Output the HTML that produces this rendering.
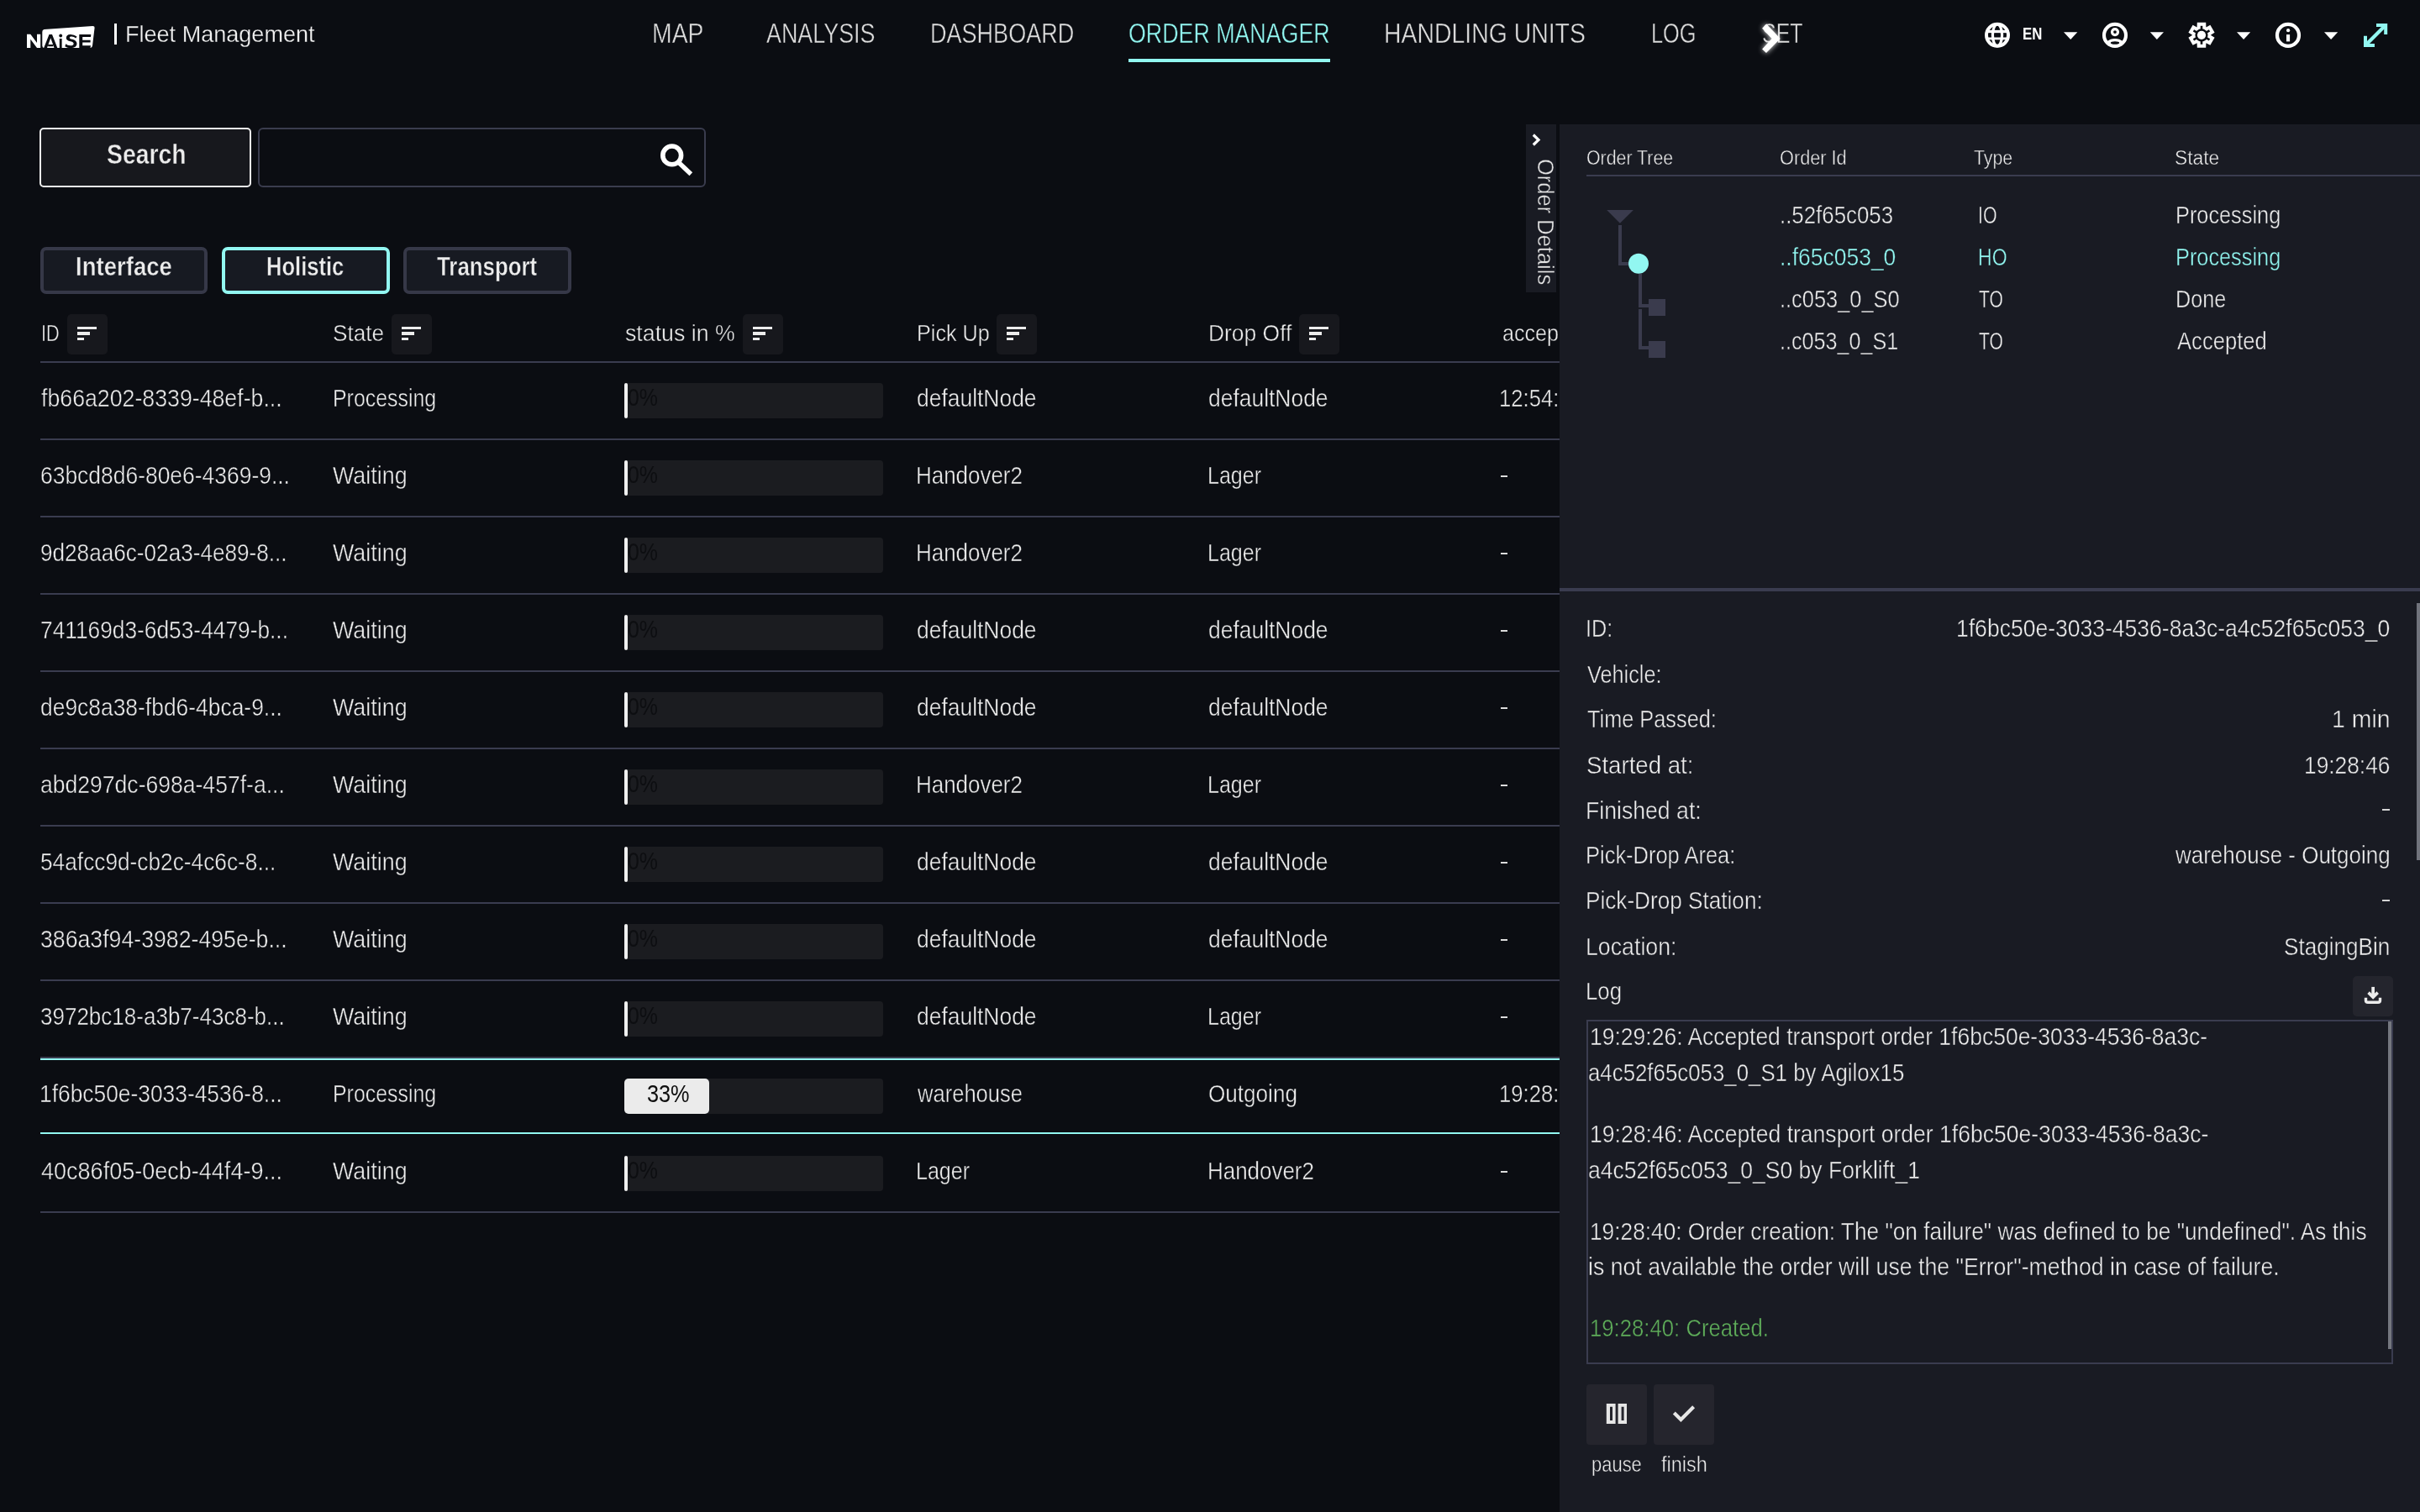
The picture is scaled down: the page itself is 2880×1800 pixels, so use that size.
<!DOCTYPE html>
<html><head><meta charset="utf-8"><style>
html,body{margin:0;padding:0;width:2880px;height:1800px;overflow:hidden;background:#0b0d12;font-family:"Liberation Sans",sans-serif}
.t{position:absolute;white-space:pre;line-height:1;transform-origin:0 0}
@media (max-width:1500px){html{zoom:0.5}}
</style></head><body>
<svg style="position:absolute;left:0;top:0" width="160" height="80" viewBox="0 0 160 80">
<path d="M32 57 L32 40.8 L36.3 40.8 L44 51 L44 40.8 L48.2 40.8 L48.2 57 L44 57 L36.3 46.7 L36.3 57 Z" fill="#fff"/>
<path d="M52.5 35 Q50.2 35.6 50.3 38 L50.3 54.5 Q50.6 57 52.5 57 L107.5 57 Q109.6 56.6 110 54.5 L112.6 33 Q112.8 30.8 110.2 30.9 Z" fill="#fff"/>
<path d="M52.2 57 L58.5 41 L62 41 L68.3 57 L64.5 57 L60.3 45.3 L56 57 Z M57.2 53 L63.2 53 L63.2 55.2 L57.2 55.2 Z" fill="#0b0d12"/>
<rect x="70.8" y="46" width="2.8" height="11" fill="#0b0d12"/>
<circle cx="72.2" cy="42.5" r="1.9" fill="#0b0d12"/>
<path d="M91.5 43.5 Q88 40.8 83.5 41 Q78.8 41.3 78.8 45.2 Q79 48.2 84 49.3 Q88 50.2 87.6 52.2 Q87.2 54.4 83.5 54.2 Q80.3 54 78.3 52.2 L77.3 55.3 Q80 57.2 84 57.2 Q91.5 57 91.5 52 Q91.4 48 86 46.8 Q82.6 46 82.8 44.7 Q83 43.5 85.2 43.6 Q88 43.7 90.3 45.6 Z" fill="#0b0d12"/>
<path d="M94.3 41.1 L108.3 41.1 L108 44 L98.2 44 L98.2 47.8 L107.6 47.8 L107.6 50.6 L98.2 50.6 L98.2 54.2 L108 54.2 L107.5 57 L94.3 57 Z" fill="#0b0d12"/>
</svg><div style="position:absolute;left:136.2px;top:28.4px;width:2.6px;height:24.4px;background:#fff;"></div><div class="t" style="left:148.50px;top:26.35px;font-size:28.41px;transform:scaleX(0.9522);color:#f2f2f2;-webkit-text-stroke:0.3px #0b0d12">Fleet Management</div><div class="t" style="left:776.25px;top:24.12px;font-size:32.46px;transform:scaleX(0.8743);color:#dcdcdc;-webkit-text-stroke:0.45px #0b0d12">MAP</div><div class="t" style="left:912.00px;top:24.12px;font-size:32.46px;transform:scaleX(0.8286);color:#dcdcdc;-webkit-text-stroke:0.45px #0b0d12">ANALYSIS</div><div class="t" style="left:1106.63px;top:24.12px;font-size:32.46px;transform:scaleX(0.8331);color:#dcdcdc;-webkit-text-stroke:0.45px #0b0d12">DASHBOARD</div><div class="t" style="left:1342.97px;top:24.12px;font-size:32.46px;transform:scaleX(0.8254);color:#92f7f1;-webkit-text-stroke:0.45px #0b0d12">ORDER MANAGER</div><div style="position:absolute;left:1343px;top:70px;width:240px;height:4px;background:#92f7f1;"></div><div class="t" style="left:1647.25px;top:24.12px;font-size:32.46px;transform:scaleX(0.8754);color:#dcdcdc;-webkit-text-stroke:0.45px #0b0d12">HANDLING UNITS</div><div class="t" style="left:1965.44px;top:24.12px;font-size:32.46px;transform:scaleX(0.7808);color:#dcdcdc;-webkit-text-stroke:0.45px #0b0d12">LOG</div><div class="t" style="left:2096.73px;top:24.12px;font-size:32.46px;transform:scaleX(0.7706);color:#dcdcdc;-webkit-text-stroke:0.45px #0b0d12">SET</div><svg style="position:absolute;left:2080px;top:15px" width="60" height="60" viewBox="2080 15 60 60">
<defs><filter id="gl" x="-50%" y="-50%" width="200%" height="200%"><feGaussianBlur stdDeviation="3"/></filter></defs>
<path d="M2097.1 33.7 L2102.2 28.5 L2118.7 46 L2102 63 L2097.1 58.5 L2108.6 46 Z" fill="#fff" filter="url(#gl)" opacity="0.9"/>
<path d="M2097.1 33.7 L2102.2 28.5 L2118.7 46 L2102 63 L2097.1 58.5 L2108.6 46 Z" fill="#fff"/>
</svg><svg style="position:absolute;left:2355px;top:20px" width="500" height="46" viewBox="2355 20 500 46">
<defs><clipPath id="ucl"><circle cx="2517" cy="41.9" r="13"/></clipPath></defs>
<g fill="none" stroke="#ffffff">
 <circle cx="2377" cy="41.8" r="13" stroke-width="4"/>
 <ellipse cx="2377" cy="41.8" rx="5.6" ry="13" stroke-width="3.2"/>
 <line x1="2363" y1="37.5" x2="2391" y2="37.5" stroke-width="3.3"/>
 <line x1="2363" y1="45.9" x2="2391" y2="45.9" stroke-width="2.8"/>
</g>
<path d="M2456 38.3 L2472.3 38.3 L2464.2 47 Z" fill="#ffffff"/>
<g fill="none" stroke="#ffffff">
 <circle cx="2517" cy="41.9" r="13" stroke-width="4.1"/>
 <circle cx="2517" cy="38.1" r="3.5" stroke-width="3.2"/>
</g>
<g clip-path="url(#ucl)"><ellipse cx="2517" cy="57.5" rx="13.5" ry="11.5" fill="#ffffff"/></g>
<ellipse cx="2517" cy="51" rx="5.2" ry="1.8" fill="#0b0d12"/>
<path d="M2558.8 38.3 L2575 38.3 L2566.9 47 Z" fill="#ffffff"/>
<path d="M2662 38.3 L2678.2 38.3 L2670.1 47 Z" fill="#ffffff"/>
<circle cx="2723" cy="41.9" r="13" fill="none" stroke="#ffffff" stroke-width="4.2"/>
<rect x="2721" y="41.1" width="4.1" height="8.3" fill="#ffffff"/>
<circle cx="2723.1" cy="36.2" r="2.1" fill="#ffffff"/>
<path d="M2766 38.3 L2782.2 38.3 L2774.1 47 Z" fill="#ffffff"/>
<g fill="#92f7f1">
 <path d="M2828 27.9 H2841.2 V41.1 H2837.2 V31.9 H2828 Z"/>
 <path d="M2813 42.8 H2817 V52 H2826 V56 H2813 Z"/>
</g>
<path d="M2839 30 L2815 54" stroke="#92f7f1" stroke-width="4.2"/>
<g transform="translate(2620 41.8)">
 <path fill="#ffffff" d="M-5.20 -15.00 L5.20 -15.00 L5.41 -9.37 L10.39 -12.00 L15.59 -3.00 L10.82 0.00 L15.59 3.00 L10.39 12.00 L5.41 9.37 L5.20 15.00 L-5.20 15.00 L-5.41 9.37 L-10.39 12.00 L-15.59 3.00 L-10.82 0.00 L-15.59 -3.00 L-10.39 -12.00 L-5.41 -9.37Z"/>
 <circle r="7.6" fill="#0b0d12"/>
 <g fill="#0b0d12"><rect x="-1.3" y="-11" width="2.6" height="5" transform="rotate(0)"/><rect x="-1.3" y="-11" width="2.6" height="5" transform="rotate(60)"/><rect x="-1.3" y="-11" width="2.6" height="5" transform="rotate(120)"/><rect x="-1.3" y="-11" width="2.6" height="5" transform="rotate(180)"/><rect x="-1.3" y="-11" width="2.6" height="5" transform="rotate(240)"/><rect x="-1.3" y="-11" width="2.6" height="5" transform="rotate(300)"/></g>
 <circle r="5.1" fill="#ffffff"/>
</g>
</svg><div class="t" style="left:2407.18px;top:29.98px;font-size:20.58px;transform:scaleX(0.8160);color:#fff;font-weight:bold">EN</div><div style="position:absolute;left:47px;top:152px;width:252px;height:71px;background:#17181d;box-sizing:border-box;border:2px solid #f0f0f0;border-radius:5px"></div><div class="t" style="left:126.50px;top:168.04px;font-size:32.32px;transform:scaleX(0.8783);color:#ececec;font-weight:bold;-webkit-text-stroke:0.45px #17181d">Search</div><div style="position:absolute;left:307px;top:152px;width:533px;height:71px;background:transparent;box-sizing:border-box;border:2px solid #3a3c4e;border-radius:6px"></div><svg style="position:absolute;left:780px;top:166px" width="50" height="48" viewBox="0 0 50 48">
<circle cx="19.7" cy="18.9" r="10.9" fill="none" stroke="#fff" stroke-width="5.6"/>
<path d="M27.5 27.3 L42.3 41.3" stroke="#fff" stroke-width="5.4" />
</svg><div style="position:absolute;left:48px;top:294px;width:199px;height:56px;background:#171a22;box-sizing:border-box;border:4px solid #363848;border-radius:7px"></div><div class="t" style="left:89.79px;top:301.94px;font-size:30.43px;transform:scaleX(0.9056);color:#ececec;font-weight:bold;-webkit-text-stroke:0.45px #171a22">Interface</div><div style="position:absolute;left:264px;top:294px;width:200px;height:56px;background:#171a22;box-sizing:border-box;border:4px solid #92f7f1;border-radius:7px"></div><div class="t" style="left:316.72px;top:301.94px;font-size:30.43px;transform:scaleX(0.8401);color:#ececec;font-weight:bold;-webkit-text-stroke:0.45px #171a22">Holistic</div><div style="position:absolute;left:480px;top:294px;width:200px;height:56px;background:#171a22;box-sizing:border-box;border:4px solid #363848;border-radius:7px"></div><div class="t" style="left:520.00px;top:301.94px;font-size:30.43px;transform:scaleX(0.8497);color:#ececec;font-weight:bold;-webkit-text-stroke:0.45px #171a22">Transport</div><div class="t" style="left:48.76px;top:382.48px;font-size:28.26px;transform:scaleX(0.7699);color:#ececec;-webkit-text-stroke:0.45px #0b0d12">ID</div><div style="position:absolute;left:80px;top:374px;width:48px;height:48px;background:#17181d;border-radius:5px"></div><div style="position:absolute;left:92.1px;top:388.8px;width:22.8px;height:3.2px;background:#ececec;"></div><div style="position:absolute;left:92.1px;top:395.4px;width:15.4px;height:3.2px;background:#ececec;"></div><div style="position:absolute;left:92.1px;top:402px;width:8.2px;height:3.2px;background:#ececec;"></div><div class="t" style="left:396.27px;top:382.48px;font-size:28.26px;transform:scaleX(0.9261);color:#ececec;-webkit-text-stroke:0.45px #0b0d12">State</div><div style="position:absolute;left:466px;top:374px;width:48px;height:48px;background:#17181d;border-radius:5px"></div><div style="position:absolute;left:478.1px;top:388.8px;width:22.8px;height:3.2px;background:#ececec;"></div><div style="position:absolute;left:478.1px;top:395.4px;width:15.4px;height:3.2px;background:#ececec;"></div><div style="position:absolute;left:478.1px;top:402px;width:8.2px;height:3.2px;background:#ececec;"></div><div class="t" style="left:743.90px;top:382.48px;font-size:28.26px;transform:scaleX(0.9460);color:#ececec;-webkit-text-stroke:0.45px #0b0d12">status in %</div><div style="position:absolute;left:884px;top:374px;width:48px;height:48px;background:#17181d;border-radius:5px"></div><div style="position:absolute;left:896.1px;top:388.8px;width:22.8px;height:3.2px;background:#ececec;"></div><div style="position:absolute;left:896.1px;top:395.4px;width:15.4px;height:3.2px;background:#ececec;"></div><div style="position:absolute;left:896.1px;top:402px;width:8.2px;height:3.2px;background:#ececec;"></div><div class="t" style="left:1090.72px;top:382.48px;font-size:28.26px;transform:scaleX(0.8909);color:#ececec;-webkit-text-stroke:0.45px #0b0d12">Pick Up</div><div style="position:absolute;left:1186px;top:374px;width:48px;height:48px;background:#17181d;border-radius:5px"></div><div style="position:absolute;left:1198.1px;top:388.8px;width:22.8px;height:3.2px;background:#ececec;"></div><div style="position:absolute;left:1198.1px;top:395.4px;width:15.4px;height:3.2px;background:#ececec;"></div><div style="position:absolute;left:1198.1px;top:402px;width:8.2px;height:3.2px;background:#ececec;"></div><div class="t" style="left:1438.13px;top:382.48px;font-size:28.26px;transform:scaleX(0.9349);color:#ececec;-webkit-text-stroke:0.45px #0b0d12">Drop Off</div><div style="position:absolute;left:1546px;top:374px;width:48px;height:48px;background:#17181d;border-radius:5px"></div><div style="position:absolute;left:1558.1px;top:388.8px;width:22.8px;height:3.2px;background:#ececec;"></div><div style="position:absolute;left:1558.1px;top:395.4px;width:15.4px;height:3.2px;background:#ececec;"></div><div style="position:absolute;left:1558.1px;top:402px;width:8.2px;height:3.2px;background:#ececec;"></div><div class="t" style="left:1787.81px;top:382.48px;font-size:28.26px;transform:scaleX(0.8895);color:#ececec;-webkit-text-stroke:0.45px #0b0d12">accep</div><div style="position:absolute;left:48px;top:430px;width:1808px;height:2px;background:#3a3c4f;"></div><div class="t" style="left:48.80px;top:459.99px;font-size:28.84px;transform:scaleX(0.9267);color:#ececec;-webkit-text-stroke:0.45px #0b0d12">fb66a202-8339-48ef-b...</div><div class="t" style="left:396.17px;top:459.99px;font-size:28.84px;transform:scaleX(0.8633);color:#ececec;-webkit-text-stroke:0.45px #0b0d12">Processing</div><div style="position:absolute;left:743px;top:456px;width:307.5px;height:41.5px;background:#1b1c20;border-radius:4px"></div><div style="position:absolute;left:742.9px;top:456px;width:4.2px;height:41.5px;background:#f0f0f0;border-radius:2px"></div><div class="t" style="left:747.44px;top:459.36px;font-size:28.99px;transform:scaleX(0.8576);color:#0d0e11">0%</div><div class="t" style="left:1090.58px;top:459.99px;font-size:28.84px;transform:scaleX(0.9170);color:#ececec;-webkit-text-stroke:0.45px #0b0d12">defaultNode</div><div class="t" style="left:1438.28px;top:459.99px;font-size:28.84px;transform:scaleX(0.9170);color:#ececec;-webkit-text-stroke:0.45px #0b0d12">defaultNode</div><div class="t" style="left:1784.22px;top:459.99px;font-size:28.84px;transform:scaleX(0.8895);color:#ececec;-webkit-text-stroke:0.45px #0b0d12">12:54:</div><div style="position:absolute;left:48px;top:522px;width:1808px;height:2px;background:#3a3c4f;"></div><div class="t" style="left:47.88px;top:551.99px;font-size:28.84px;transform:scaleX(0.9172);color:#ececec;-webkit-text-stroke:0.45px #0b0d12">63bcd8d6-80e6-4369-9...</div><div class="t" style="left:395.90px;top:551.99px;font-size:28.84px;transform:scaleX(0.9317);color:#ececec;-webkit-text-stroke:0.45px #0b0d12">Waiting</div><div style="position:absolute;left:743px;top:548px;width:307.5px;height:41.5px;background:#1b1c20;border-radius:4px"></div><div style="position:absolute;left:742.9px;top:548px;width:4.2px;height:41.5px;background:#f0f0f0;border-radius:2px"></div><div class="t" style="left:747.44px;top:551.36px;font-size:28.99px;transform:scaleX(0.8576);color:#0d0e11">0%</div><div class="t" style="left:1089.70px;top:551.99px;font-size:28.84px;transform:scaleX(0.9000);color:#ececec;-webkit-text-stroke:0.45px #0b0d12">Handover2</div><div class="t" style="left:1437.46px;top:551.99px;font-size:28.84px;transform:scaleX(0.8692);color:#ececec;-webkit-text-stroke:0.45px #0b0d12">Lager</div><div style="position:absolute;left:1786px;top:566px;width:8px;height:2px;background:#dcdcdc;"></div><div style="position:absolute;left:48px;top:614px;width:1808px;height:2px;background:#3a3c4f;"></div><div class="t" style="left:47.89px;top:643.99px;font-size:28.84px;transform:scaleX(0.9069);color:#ececec;-webkit-text-stroke:0.45px #0b0d12">9d28aa6c-02a3-4e89-8...</div><div class="t" style="left:395.90px;top:643.99px;font-size:28.84px;transform:scaleX(0.9317);color:#ececec;-webkit-text-stroke:0.45px #0b0d12">Waiting</div><div style="position:absolute;left:743px;top:640px;width:307.5px;height:41.5px;background:#1b1c20;border-radius:4px"></div><div style="position:absolute;left:742.9px;top:640px;width:4.2px;height:41.5px;background:#f0f0f0;border-radius:2px"></div><div class="t" style="left:747.44px;top:643.36px;font-size:28.99px;transform:scaleX(0.8576);color:#0d0e11">0%</div><div class="t" style="left:1089.70px;top:643.99px;font-size:28.84px;transform:scaleX(0.9000);color:#ececec;-webkit-text-stroke:0.45px #0b0d12">Handover2</div><div class="t" style="left:1437.46px;top:643.99px;font-size:28.84px;transform:scaleX(0.8692);color:#ececec;-webkit-text-stroke:0.45px #0b0d12">Lager</div><div style="position:absolute;left:1786px;top:658px;width:8px;height:2px;background:#dcdcdc;"></div><div style="position:absolute;left:48px;top:706px;width:1808px;height:2px;background:#3a3c4f;"></div><div class="t" style="left:47.89px;top:735.99px;font-size:28.84px;transform:scaleX(0.9125);color:#ececec;-webkit-text-stroke:0.45px #0b0d12">741169d3-6d53-4479-b...</div><div class="t" style="left:395.90px;top:735.99px;font-size:28.84px;transform:scaleX(0.9317);color:#ececec;-webkit-text-stroke:0.45px #0b0d12">Waiting</div><div style="position:absolute;left:743px;top:732px;width:307.5px;height:41.5px;background:#1b1c20;border-radius:4px"></div><div style="position:absolute;left:742.9px;top:732px;width:4.2px;height:41.5px;background:#f0f0f0;border-radius:2px"></div><div class="t" style="left:747.44px;top:735.36px;font-size:28.99px;transform:scaleX(0.8576);color:#0d0e11">0%</div><div class="t" style="left:1090.58px;top:735.99px;font-size:28.84px;transform:scaleX(0.9170);color:#ececec;-webkit-text-stroke:0.45px #0b0d12">defaultNode</div><div class="t" style="left:1438.28px;top:735.99px;font-size:28.84px;transform:scaleX(0.9170);color:#ececec;-webkit-text-stroke:0.45px #0b0d12">defaultNode</div><div style="position:absolute;left:1786px;top:750px;width:8px;height:2px;background:#dcdcdc;"></div><div style="position:absolute;left:48px;top:798px;width:1808px;height:2px;background:#3a3c4f;"></div><div class="t" style="left:47.88px;top:827.99px;font-size:28.84px;transform:scaleX(0.9164);color:#ececec;-webkit-text-stroke:0.45px #0b0d12">de9c8a38-fbd6-4bca-9...</div><div class="t" style="left:395.90px;top:827.99px;font-size:28.84px;transform:scaleX(0.9317);color:#ececec;-webkit-text-stroke:0.45px #0b0d12">Waiting</div><div style="position:absolute;left:743px;top:824px;width:307.5px;height:41.5px;background:#1b1c20;border-radius:4px"></div><div style="position:absolute;left:742.9px;top:824px;width:4.2px;height:41.5px;background:#f0f0f0;border-radius:2px"></div><div class="t" style="left:747.44px;top:827.36px;font-size:28.99px;transform:scaleX(0.8576);color:#0d0e11">0%</div><div class="t" style="left:1090.58px;top:827.99px;font-size:28.84px;transform:scaleX(0.9170);color:#ececec;-webkit-text-stroke:0.45px #0b0d12">defaultNode</div><div class="t" style="left:1438.28px;top:827.99px;font-size:28.84px;transform:scaleX(0.9170);color:#ececec;-webkit-text-stroke:0.45px #0b0d12">defaultNode</div><div style="position:absolute;left:1786px;top:842px;width:8px;height:2px;background:#dcdcdc;"></div><div style="position:absolute;left:48px;top:890px;width:1808px;height:2px;background:#3a3c4f;"></div><div class="t" style="left:47.88px;top:919.99px;font-size:28.84px;transform:scaleX(0.9209);color:#ececec;-webkit-text-stroke:0.45px #0b0d12">abd297dc-698a-457f-a...</div><div class="t" style="left:395.90px;top:919.99px;font-size:28.84px;transform:scaleX(0.9317);color:#ececec;-webkit-text-stroke:0.45px #0b0d12">Waiting</div><div style="position:absolute;left:743px;top:916px;width:307.5px;height:41.5px;background:#1b1c20;border-radius:4px"></div><div style="position:absolute;left:742.9px;top:916px;width:4.2px;height:41.5px;background:#f0f0f0;border-radius:2px"></div><div class="t" style="left:747.44px;top:919.36px;font-size:28.99px;transform:scaleX(0.8576);color:#0d0e11">0%</div><div class="t" style="left:1089.70px;top:919.99px;font-size:28.84px;transform:scaleX(0.9000);color:#ececec;-webkit-text-stroke:0.45px #0b0d12">Handover2</div><div class="t" style="left:1437.46px;top:919.99px;font-size:28.84px;transform:scaleX(0.8692);color:#ececec;-webkit-text-stroke:0.45px #0b0d12">Lager</div><div style="position:absolute;left:1786px;top:934px;width:8px;height:2px;background:#dcdcdc;"></div><div style="position:absolute;left:48px;top:982px;width:1808px;height:2px;background:#3a3c4f;"></div><div class="t" style="left:47.89px;top:1011.99px;font-size:28.84px;transform:scaleX(0.9112);color:#ececec;-webkit-text-stroke:0.45px #0b0d12">54afcc9d-cb2c-4c6c-8...</div><div class="t" style="left:395.90px;top:1011.99px;font-size:28.84px;transform:scaleX(0.9317);color:#ececec;-webkit-text-stroke:0.45px #0b0d12">Waiting</div><div style="position:absolute;left:743px;top:1008px;width:307.5px;height:41.5px;background:#1b1c20;border-radius:4px"></div><div style="position:absolute;left:742.9px;top:1008px;width:4.2px;height:41.5px;background:#f0f0f0;border-radius:2px"></div><div class="t" style="left:747.44px;top:1011.36px;font-size:28.99px;transform:scaleX(0.8576);color:#0d0e11">0%</div><div class="t" style="left:1090.58px;top:1011.99px;font-size:28.84px;transform:scaleX(0.9170);color:#ececec;-webkit-text-stroke:0.45px #0b0d12">defaultNode</div><div class="t" style="left:1438.28px;top:1011.99px;font-size:28.84px;transform:scaleX(0.9170);color:#ececec;-webkit-text-stroke:0.45px #0b0d12">defaultNode</div><div style="position:absolute;left:1786px;top:1026px;width:8px;height:2px;background:#dcdcdc;"></div><div style="position:absolute;left:48px;top:1074px;width:1808px;height:2px;background:#3a3c4f;"></div><div class="t" style="left:47.87px;top:1103.99px;font-size:28.84px;transform:scaleX(0.9254);color:#ececec;-webkit-text-stroke:0.45px #0b0d12">386a3f94-3982-495e-b...</div><div class="t" style="left:395.90px;top:1103.99px;font-size:28.84px;transform:scaleX(0.9317);color:#ececec;-webkit-text-stroke:0.45px #0b0d12">Waiting</div><div style="position:absolute;left:743px;top:1100px;width:307.5px;height:41.5px;background:#1b1c20;border-radius:4px"></div><div style="position:absolute;left:742.9px;top:1100px;width:4.2px;height:41.5px;background:#f0f0f0;border-radius:2px"></div><div class="t" style="left:747.44px;top:1103.36px;font-size:28.99px;transform:scaleX(0.8576);color:#0d0e11">0%</div><div class="t" style="left:1090.58px;top:1103.99px;font-size:28.84px;transform:scaleX(0.9170);color:#ececec;-webkit-text-stroke:0.45px #0b0d12">defaultNode</div><div class="t" style="left:1438.28px;top:1103.99px;font-size:28.84px;transform:scaleX(0.9170);color:#ececec;-webkit-text-stroke:0.45px #0b0d12">defaultNode</div><div style="position:absolute;left:1786px;top:1118px;width:8px;height:2px;background:#dcdcdc;"></div><div style="position:absolute;left:48px;top:1166px;width:1808px;height:2px;background:#3a3c4f;"></div><div class="t" style="left:47.90px;top:1195.99px;font-size:28.84px;transform:scaleX(0.9024);color:#ececec;-webkit-text-stroke:0.45px #0b0d12">3972bc18-a3b7-43c8-b...</div><div class="t" style="left:395.90px;top:1195.99px;font-size:28.84px;transform:scaleX(0.9317);color:#ececec;-webkit-text-stroke:0.45px #0b0d12">Waiting</div><div style="position:absolute;left:743px;top:1192px;width:307.5px;height:41.5px;background:#1b1c20;border-radius:4px"></div><div style="position:absolute;left:742.9px;top:1192px;width:4.2px;height:41.5px;background:#f0f0f0;border-radius:2px"></div><div class="t" style="left:747.44px;top:1195.36px;font-size:28.99px;transform:scaleX(0.8576);color:#0d0e11">0%</div><div class="t" style="left:1090.58px;top:1195.99px;font-size:28.84px;transform:scaleX(0.9170);color:#ececec;-webkit-text-stroke:0.45px #0b0d12">defaultNode</div><div class="t" style="left:1437.46px;top:1195.99px;font-size:28.84px;transform:scaleX(0.8692);color:#ececec;-webkit-text-stroke:0.45px #0b0d12">Lager</div><div style="position:absolute;left:1786px;top:1210px;width:8px;height:2px;background:#dcdcdc;"></div><div style="position:absolute;left:48px;top:1258px;width:1808px;height:2px;background:#3a3c4f;"></div><div class="t" style="left:46.97px;top:1287.99px;font-size:28.84px;transform:scaleX(0.9146);color:#ececec;-webkit-text-stroke:0.45px #0b0d12">1f6bc50e-3033-4536-8...</div><div class="t" style="left:396.17px;top:1287.99px;font-size:28.84px;transform:scaleX(0.8633);color:#ececec;-webkit-text-stroke:0.45px #0b0d12">Processing</div><div style="position:absolute;left:743px;top:1284px;width:307.5px;height:42px;background:#1b1c20;border-radius:4px"></div><div style="position:absolute;left:743px;top:1284px;width:101px;height:42px;background:#ebebeb;border-radius:5px"></div><div class="t" style="left:770.15px;top:1287.33px;font-size:29.86px;transform:scaleX(0.8454);color:#0d0d0d">33%</div><div class="t" style="left:1092.39px;top:1287.99px;font-size:28.84px;transform:scaleX(0.8865);color:#ececec;-webkit-text-stroke:0.45px #0b0d12">warehouse</div><div class="t" style="left:1438.29px;top:1287.99px;font-size:28.84px;transform:scaleX(0.9055);color:#ececec;-webkit-text-stroke:0.45px #0b0d12">Outgoing</div><div class="t" style="left:1784.22px;top:1287.99px;font-size:28.84px;transform:scaleX(0.8895);color:#ececec;-webkit-text-stroke:0.45px #0b0d12">19:28:</div><div class="t" style="left:48.80px;top:1379.99px;font-size:28.84px;transform:scaleX(0.9375);color:#ececec;-webkit-text-stroke:0.45px #0b0d12">40c86f05-0ecb-44f4-9...</div><div class="t" style="left:395.90px;top:1379.99px;font-size:28.84px;transform:scaleX(0.9317);color:#ececec;-webkit-text-stroke:0.45px #0b0d12">Waiting</div><div style="position:absolute;left:743px;top:1376px;width:307.5px;height:41.5px;background:#1b1c20;border-radius:4px"></div><div style="position:absolute;left:742.9px;top:1376px;width:4.2px;height:41.5px;background:#f0f0f0;border-radius:2px"></div><div class="t" style="left:747.44px;top:1379.36px;font-size:28.99px;transform:scaleX(0.8576);color:#0d0e11">0%</div><div class="t" style="left:1089.76px;top:1379.99px;font-size:28.84px;transform:scaleX(0.8692);color:#ececec;-webkit-text-stroke:0.45px #0b0d12">Lager</div><div class="t" style="left:1437.40px;top:1379.99px;font-size:28.84px;transform:scaleX(0.9000);color:#ececec;-webkit-text-stroke:0.45px #0b0d12">Handover2</div><div style="position:absolute;left:1786px;top:1394px;width:8px;height:2px;background:#dcdcdc;"></div><div style="position:absolute;left:48px;top:1442px;width:1808px;height:2px;background:#3a3c4f;"></div><div style="position:absolute;left:48px;top:1260px;width:1808px;height:2px;background:#92f7f1;"></div><div style="position:absolute;left:48px;top:1348px;width:1808px;height:2px;background:#92f7f1;"></div><div style="position:absolute;left:1856px;top:148px;width:1024px;height:1652px;background:#191b23;"></div><div style="position:absolute;left:1816px;top:148px;width:36px;height:200px;background:#191b23;"></div><svg style="position:absolute;left:1816px;top:148px" width="36" height="40" viewBox="0 0 36 40">
<path d="M8.8 12.5 L15 18.5 L8.8 24.5" stroke="#fff" stroke-width="3.2" fill="none"/></svg><div id="odt" style="position:absolute;left:1829.8px;top:189.5px;width:0;height:0"></div><div class="t" style="left:1888.32px;top:175.79px;font-size:24.35px;transform:scaleX(0.8761);color:#ececec;-webkit-text-stroke:0.45px #191b23">Order Tree</div><div class="t" style="left:2117.91px;top:175.79px;font-size:24.35px;transform:scaleX(0.8927);color:#ececec;-webkit-text-stroke:0.45px #191b23">Order Id</div><div class="t" style="left:2349.00px;top:175.79px;font-size:24.35px;transform:scaleX(0.8753);color:#ececec;-webkit-text-stroke:0.45px #191b23">Type</div><div class="t" style="left:2587.76px;top:175.79px;font-size:24.35px;transform:scaleX(0.9353);color:#ececec;-webkit-text-stroke:0.45px #191b23">State</div><div style="position:absolute;left:1888px;top:208px;width:992px;height:2px;background:#3a3c4f;"></div><div class="t" style="left:2117.90px;top:242.31px;font-size:28.70px;transform:scaleX(0.9008);color:#ececec;-webkit-text-stroke:0.45px #191b23">..52f65c053</div><div class="t" style="left:2353.81px;top:242.31px;font-size:28.70px;transform:scaleX(0.7453);color:#ececec;-webkit-text-stroke:0.45px #191b23">IO</div><div class="t" style="left:2589.24px;top:242.31px;font-size:28.70px;transform:scaleX(0.8823);color:#ececec;-webkit-text-stroke:0.45px #191b23">Processing</div><div class="t" style="left:2117.85px;top:292.31px;font-size:28.70px;transform:scaleX(0.9226);color:#92f7f1;-webkit-text-stroke:0.45px #191b23">..f65c053_0</div><div class="t" style="left:2353.69px;top:292.31px;font-size:28.70px;transform:scaleX(0.8032);color:#92f7f1;-webkit-text-stroke:0.45px #191b23">HO</div><div class="t" style="left:2589.24px;top:292.31px;font-size:28.70px;transform:scaleX(0.8823);color:#92f7f1;-webkit-text-stroke:0.45px #191b23">Processing</div><div class="t" style="left:2117.93px;top:342.31px;font-size:28.70px;transform:scaleX(0.8853);color:#ececec;-webkit-text-stroke:0.45px #191b23">..c053_0_S0</div><div class="t" style="left:2355.30px;top:342.31px;font-size:28.70px;transform:scaleX(0.7341);color:#ececec;-webkit-text-stroke:0.45px #191b23">TO</div><div class="t" style="left:2589.24px;top:342.31px;font-size:28.70px;transform:scaleX(0.8792);color:#ececec;-webkit-text-stroke:0.45px #191b23">Done</div><div class="t" style="left:2117.95px;top:392.31px;font-size:28.70px;transform:scaleX(0.8770);color:#ececec;-webkit-text-stroke:0.45px #191b23">..c053_0_S1</div><div class="t" style="left:2355.30px;top:392.31px;font-size:28.70px;transform:scaleX(0.7341);color:#ececec;-webkit-text-stroke:0.45px #191b23">TO</div><div class="t" style="left:2591.00px;top:392.31px;font-size:28.70px;transform:scaleX(0.8925);color:#ececec;-webkit-text-stroke:0.45px #191b23">Accepted</div><svg style="position:absolute;left:1900px;top:240px" width="100" height="200" viewBox="1900 240 100 200">
<path d="M1912.2 250 L1943.9 250 L1927.9 265.8 Z" fill="#3a3b4d"/>
<rect x="1926" y="268" width="4" height="48" fill="#3a3b4d"/>
<rect x="1926" y="312" width="14" height="4" fill="#3a3b4d"/>
<circle cx="1950" cy="313.8" r="12" fill="#92f7f1"/>
<rect x="1950" y="326" width="4" height="40" fill="#3a3b4d"/>
<rect x="1950" y="362" width="13" height="4" fill="#3a3b4d"/>
<rect x="1962" y="356" width="20" height="20" fill="#3a3b4d"/>
<rect x="1950" y="368" width="4" height="48" fill="#3a3b4d"/>
<rect x="1950" y="412" width="13" height="4" fill="#3a3b4d"/>
<rect x="1962" y="406" width="20" height="20" fill="#3a3b4d"/>
</svg><div style="position:absolute;left:1856px;top:700px;width:1024px;height:4px;background:#3a3c4f;"></div><div class="t" style="left:1886.84px;top:734.31px;font-size:28.70px;transform:scaleX(0.8811);color:#ececec;-webkit-text-stroke:0.45px #191b23">ID:</div><div class="t" style="left:2328.05px;top:734.31px;font-size:28.70px;transform:scaleX(0.9247);color:#ececec;-webkit-text-stroke:0.45px #191b23">1f6bc50e-3033-4536-8a3c-a4c52f65c053_0</div><div class="t" style="left:1888.60px;top:788.51px;font-size:28.70px;transform:scaleX(0.8812);color:#ececec;-webkit-text-stroke:0.45px #191b23">Vehicle:</div><div class="t" style="left:1888.60px;top:842.11px;font-size:28.70px;transform:scaleX(0.8826);color:#ececec;-webkit-text-stroke:0.45px #191b23">Time Passed:</div><div class="t" style="left:2774.82px;top:842.11px;font-size:28.70px;transform:scaleX(0.9911);color:#ececec;-webkit-text-stroke:0.45px #191b23">1 min</div><div class="t" style="left:1887.64px;top:896.71px;font-size:28.70px;transform:scaleX(0.9630);color:#ececec;-webkit-text-stroke:0.45px #191b23">Started at:</div><div class="t" style="left:2741.87px;top:896.71px;font-size:28.70px;transform:scaleX(0.9171);color:#ececec;-webkit-text-stroke:0.45px #191b23">19:28:46</div><div class="t" style="left:1886.74px;top:950.51px;font-size:28.70px;transform:scaleX(0.9284);color:#ececec;-webkit-text-stroke:0.45px #191b23">Finished at:</div><div style="position:absolute;left:2835px;top:963.4px;width:8.5px;height:2px;background:#d4d4d4;"></div><div class="t" style="left:1886.82px;top:1004.11px;font-size:28.70px;transform:scaleX(0.8877);color:#ececec;-webkit-text-stroke:0.45px #191b23">Pick-Drop Area:</div><div class="t" style="left:2588.61px;top:1004.11px;font-size:28.70px;transform:scaleX(0.9057);color:#ececec;-webkit-text-stroke:0.45px #191b23">warehouse - Outgoing</div><div class="t" style="left:1886.78px;top:1057.91px;font-size:28.70px;transform:scaleX(0.9115);color:#ececec;-webkit-text-stroke:0.45px #191b23">Pick-Drop Station:</div><div style="position:absolute;left:2835px;top:1070.8px;width:8.5px;height:2px;background:#d4d4d4;"></div><div class="t" style="left:1886.74px;top:1112.51px;font-size:28.70px;transform:scaleX(0.9319);color:#ececec;-webkit-text-stroke:0.45px #191b23">Location:</div><div class="t" style="left:2717.89px;top:1112.51px;font-size:28.70px;transform:scaleX(0.9108);color:#ececec;-webkit-text-stroke:0.45px #191b23">StagingBin</div><div class="t" style="left:1886.80px;top:1166.11px;font-size:28.70px;transform:scaleX(0.8996);color:#ececec;-webkit-text-stroke:0.45px #191b23">Log</div><div style="position:absolute;left:2876px;top:718px;width:4px;height:306px;background:#70737c;"></div><div style="position:absolute;left:2800px;top:1162px;width:48px;height:48px;background:#24252d;border-radius:5px"></div><svg style="position:absolute;left:2800px;top:1162px" width="48" height="48" viewBox="0 0 48 48">
<path d="M24.15 12.9 L24.15 25" stroke="#ececec" stroke-width="3.7"/>
<path d="M18.6 19.6 L24.15 25.1 L29.7 19.6" stroke="#ececec" stroke-width="3.6" fill="none"/>
<path d="M15.5 25.8 L15.5 29 Q15.5 31.3 18 31.3 L30 31.3 Q32.5 31.3 32.5 29 L32.5 25.8" stroke="#ececec" stroke-width="3.4" fill="none"/>
</svg><div style="position:absolute;left:1888px;top:1214px;width:960px;height:410px;background:transparent;box-sizing:border-box;border:2px solid #3a3c4f"></div><div style="position:absolute;left:2842px;top:1216px;width:4px;height:390px;background:#74777f;"></div><div class="t" style="left:1891.87px;top:1219.66px;font-size:28.99px;transform:scaleX(0.9141);color:#ececec;-webkit-text-stroke:0.45px #191b23">19:29:26: Accepted transport order 1f6bc50e-3033-4536-8a3c-</div><div class="t" style="left:1889.81px;top:1262.66px;font-size:28.99px;transform:scaleX(0.8911);color:#ececec;-webkit-text-stroke:0.45px #191b23">a4c52f65c053_0_S1 by Agilox15</div><div class="t" style="left:1891.87px;top:1335.66px;font-size:28.99px;transform:scaleX(0.9157);color:#ececec;-webkit-text-stroke:0.45px #191b23">19:28:46: Accepted transport order 1f6bc50e-3033-4536-8a3c-</div><div class="t" style="left:1889.79px;top:1378.66px;font-size:28.99px;transform:scaleX(0.9146);color:#ececec;-webkit-text-stroke:0.45px #191b23">a4c52f65c053_0_S0 by Forklift_1</div><div class="t" style="left:1891.89px;top:1451.76px;font-size:28.99px;transform:scaleX(0.9063);color:#ececec;-webkit-text-stroke:0.45px #191b23">19:28:40: Order creation: The "on failure" was defined to be "undefined". As this</div><div class="t" style="left:1889.78px;top:1493.86px;font-size:28.99px;transform:scaleX(0.9205);color:#ececec;-webkit-text-stroke:0.45px #191b23">is not available the order will use the "Error"-method in case of failure.</div><div class="t" style="left:1891.93px;top:1566.86px;font-size:28.99px;transform:scaleX(0.8872);color:#5fae5a;-webkit-text-stroke:0.45px #191b23">19:28:40: Created.</div><div style="position:absolute;left:1888px;top:1648px;width:72px;height:72px;background:#25252d;border-radius:4px"></div><div style="position:absolute;left:1968px;top:1648px;width:72px;height:72px;background:#25252d;border-radius:4px"></div><svg style="position:absolute;left:1888px;top:1648px" width="152" height="72" viewBox="1888 1648 152 72">
<path d="M1911.8 1671 H1922.6 V1695 H1911.8 Z M1916 1674.8 V1691 H1919 V1674.8 Z" fill="#e6e6e6" fill-rule="evenodd"/>
<path d="M1925.6 1671 H1936 V1695 H1925.6 Z M1929.6 1674.8 V1691 H1932.6 V1674.8 Z" fill="#e6e6e6" fill-rule="evenodd"/>
<path d="M1992.3 1682 L2000.4 1690 L2015.6 1674.8" stroke="#e6e6e6" stroke-width="4.2" fill="none"/>
</svg><div class="t" style="left:1893.73px;top:1730.73px;font-size:25.36px;transform:scaleX(0.8658);color:#ececec;-webkit-text-stroke:0.45px #191b23">pause</div><div class="t" style="left:1976.70px;top:1730.73px;font-size:25.36px;transform:scaleX(0.9243);color:#ececec;-webkit-text-stroke:0.45px #191b23">finish</div>
<div style="position:absolute;left:1829.8px;top:189.5px;transform:rotate(90deg);transform-origin:0 0"><div class="t" style="left:-0.89px;top:-24.17px;font-size:28.55px;transform:scaleX(0.8928);color:#e6e6e6;-webkit-text-stroke:0.45px #191b23">Order Details</div></div>
</body></html>
